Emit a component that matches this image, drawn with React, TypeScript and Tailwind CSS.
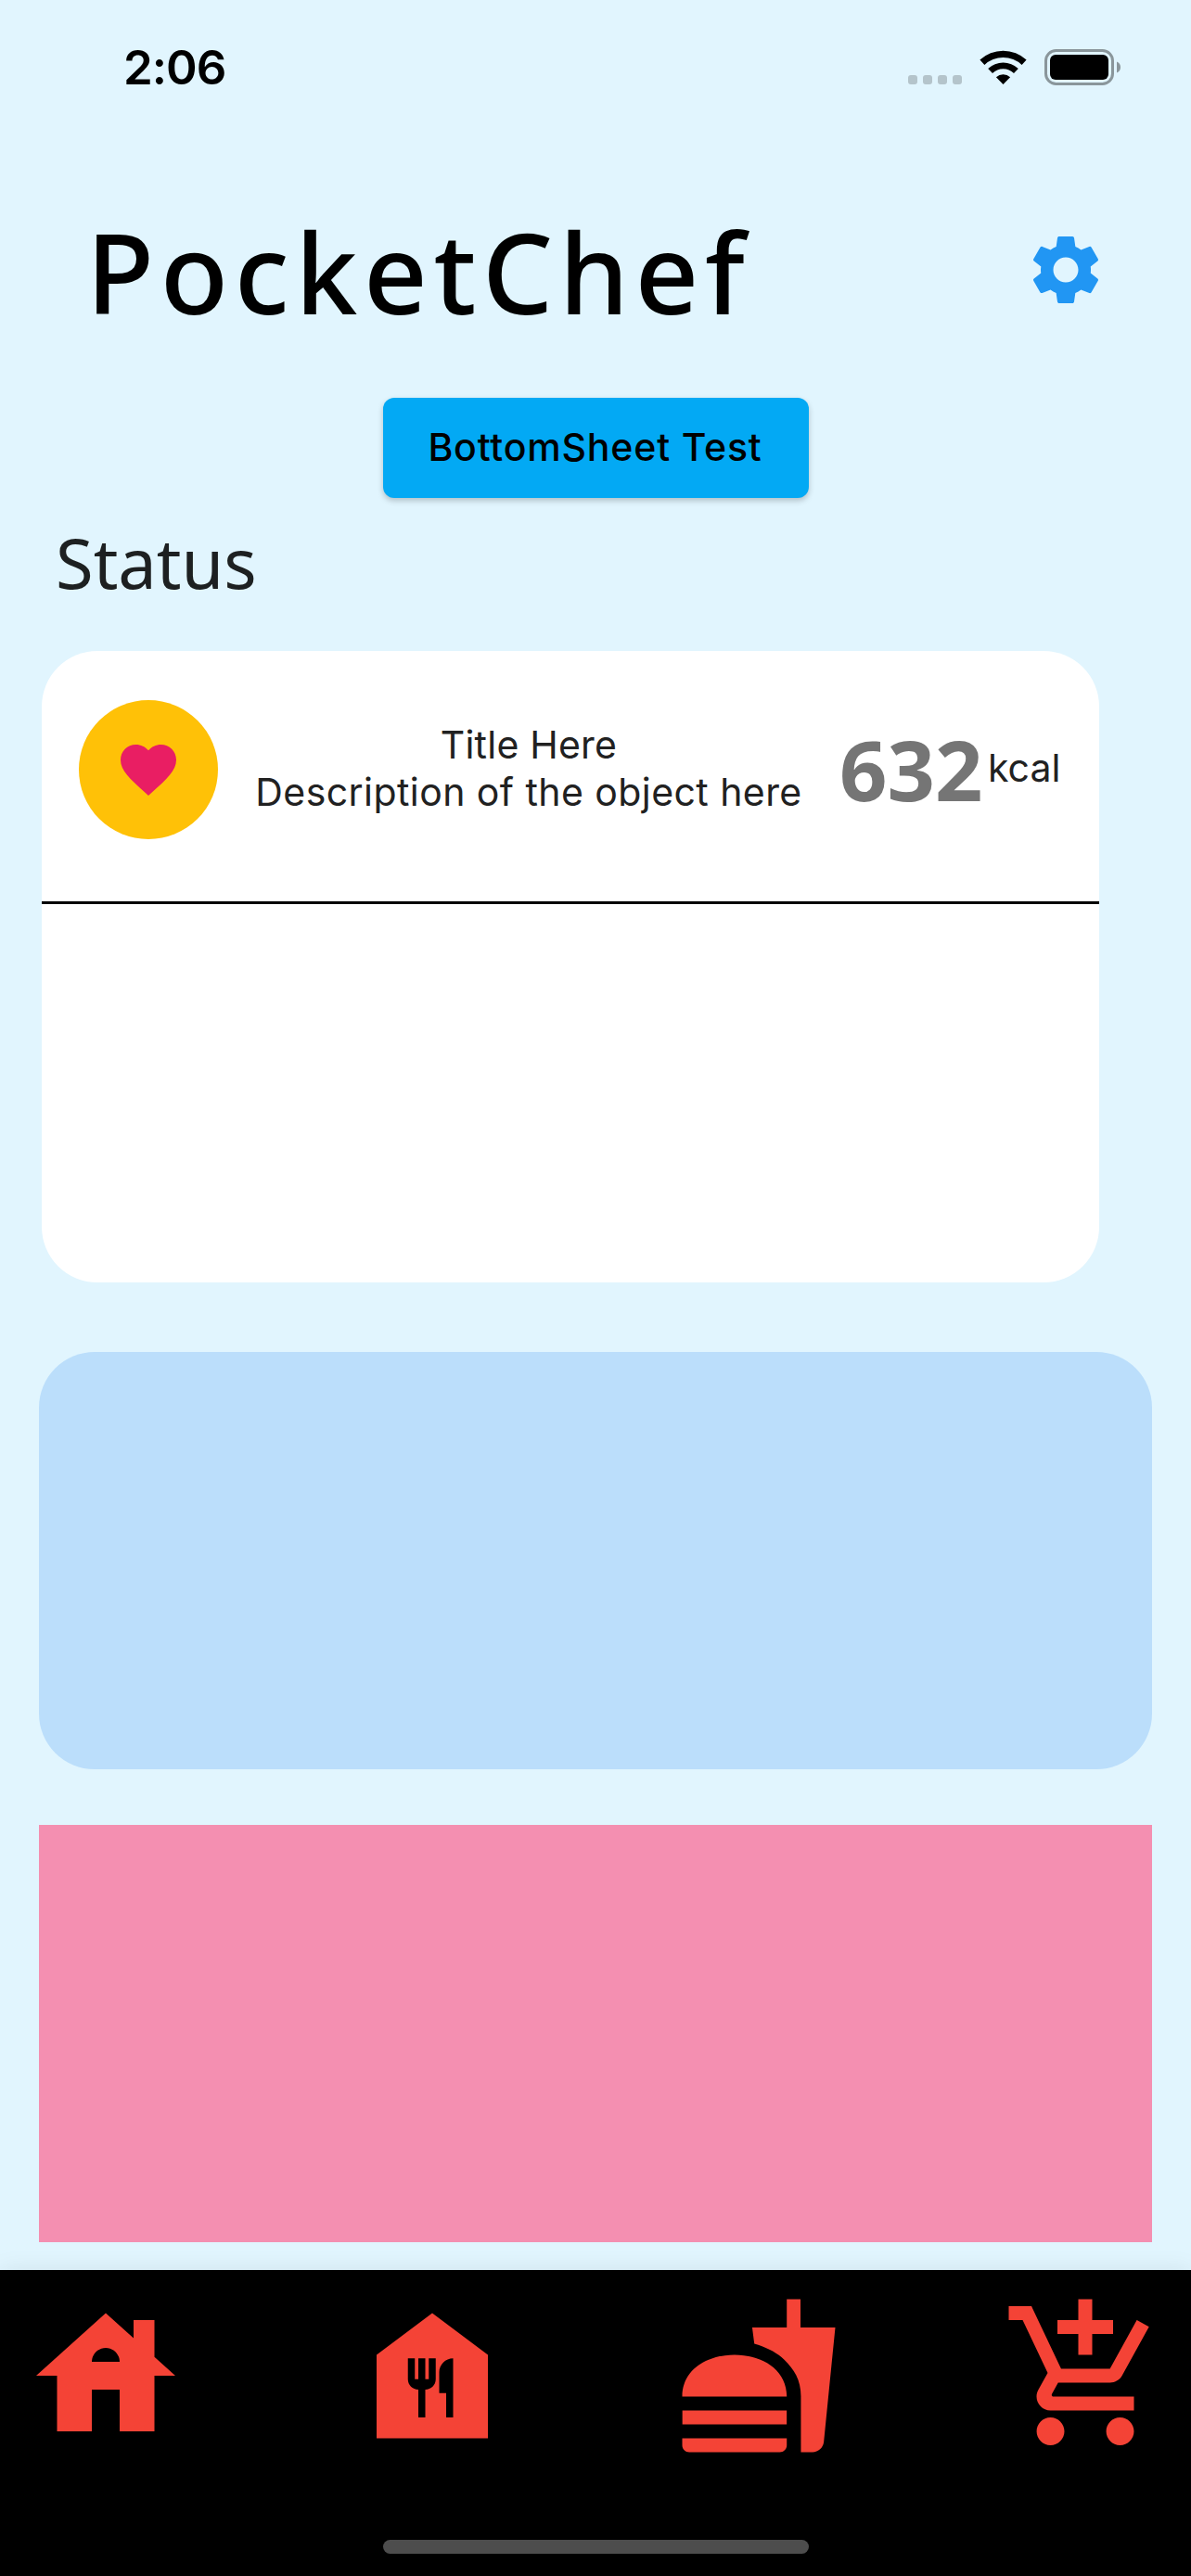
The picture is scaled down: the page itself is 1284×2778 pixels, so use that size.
import React from 'react';
import {
  MdAddShoppingCart,
  MdFastfood,
  MdFavorite,
  MdFoodBank,
  MdHouse,
  MdSettings,
} from 'react-icons/md';

function WifiIcon() {
  return (
    <svg className="mt-[54px] ml-[19px] h-[37px] w-[51px]" viewBox="0 0 51 37" fill="#000" aria-hidden="true">
      <path d="M0.4 10.6A36.8 36.8 0 0 1 50.6 10.6L45.6 15.9A29.3 29.3 0 0 0 5.4 15.9Z" />
      <path d="M9.2 19.9A24 24 0 0 1 41.8 19.9L37 25A16.5 16.5 0 0 0 14 25Z" />
      <path d="M17.9 29.2A11.2 11.2 0 0 1 33.1 29.2L25.5 37Z" />
    </svg>
  );
}

function BatteryIcon() {
  return (
    <svg className="mt-[53px] ml-[19px] h-[39px] w-[82px]" viewBox="0 0 82 39" aria-hidden="true">
      <rect x="1.5" y="1.5" width="72" height="36" rx="11" fill="none" stroke="#8a969b" strokeWidth="3" />
      <rect x="6" y="6" width="63" height="27" rx="6" fill="#000" />
      <path d="M78 13.5C80.5 14.5 82 16.8 82 19.5S80.5 24.5 78 25.5Z" fill="#8a969b" />
    </svg>
  );
}

function StatusBar() {
  return (
    <div className="flex h-[141px] items-start justify-between pr-[76px] pl-[133px]">
      <span className="mt-[43px] text-[51px] leading-[60px] font-semibold tracking-[-1px] text-black">2:06</span>
      <div className="flex items-start">
        <div className="mt-[81px] flex gap-[6px]">
          {[0, 1, 2, 3].map((i) => (
            <span key={i} className="size-[10px] rounded-[3px] bg-[#b4c4cb]" />
          ))}
        </div>
        <WifiIcon />
        <BatteryIcon />
      </div>
    </div>
  );
}

export default function App() {
  return (
    <div className="flex h-[2778px] w-[1284px] flex-col overflow-hidden bg-[#e1f5fe] font-[Inter,sans-serif]">
      <StatusBar />

      <header className="mt-[72px] flex h-[160px] items-center justify-between pr-[90px] pl-[93px]">
        <h1 className="font-['Noto_Sans',sans-serif] text-[120px] leading-[160px] font-medium tracking-[6.6px] whitespace-nowrap text-black">
          PocketChef
        </h1>
        <MdSettings className="mb-[4px] size-[90px] text-[#2196f3]" />
      </header>

      <button className="mt-[56px] flex h-[108px] w-[459px] items-center justify-center self-center rounded-[12px] bg-[#03a9f4] pr-[1px] pb-[2px] text-[41px] leading-[51px] font-medium tracking-[0.82px] whitespace-nowrap text-black shadow-[0_3px_6px_rgba(0,0,0,0.22)]">
        BottomSheet Test
      </button>

      <h2 className="mt-[20px] ml-[60px] h-[100px] font-['Noto_Sans',sans-serif] text-[74px] leading-[100px] text-[#1d2021]">
        Status
      </h2>

      <section className="mt-[45px] ml-[45px] h-[681px] w-[1140px] shrink-0 overflow-hidden rounded-[60px] bg-white text-[#212121]">
        <div className="flex h-[255px] items-center pl-[40px] text-[41px] leading-[51px] whitespace-nowrap">
          <div className="flex size-[150px] shrink-0 items-center justify-center rounded-full bg-[#ffc107]">
            <MdFavorite className="size-[72px] text-[#e91e63]" />
          </div>
          <div className="ml-[40px] w-[590px] pb-[2px] text-center tracking-[0.43px]">
            <p className="tracking-[0.23px]">Title Here</p>
            <p>Description of the object here</p>
          </div>
          <span className="ml-[40px] w-[156px] font-['Noto_Sans',sans-serif] text-[90px] leading-[123px] font-bold text-[#757575]">
            632
          </span>
          <span className="ml-[4px] pb-[2px]">kcal</span>
        </div>
        <div className="mt-[15px] h-[3px] bg-black" />
      </section>

      <section className="mx-[42px] mt-[75px] h-[450px] shrink-0 rounded-[60px] bg-[#bbdefb]" />
      <section className="mx-[42px] mt-[60px] h-[450px] shrink-0 bg-[#f48fb1]" />

      <nav className="mt-[30px] flex h-[330px] shrink-0 flex-col items-center justify-between bg-black pb-[24px] shadow-[0_0_24px_rgba(0,0,0,0.08)]">
        <div className="flex w-full justify-between px-[24px] pt-[24px] text-[#f44336]">
          <MdHouse className="size-[180px]" />
          <MdFoodBank className="size-[180px]" />
          <MdFastfood className="size-[180px]" />
          <MdAddShoppingCart className="size-[180px]" />
        </div>
        <div className="h-[15px] w-[459px] rounded-full bg-[#4d4d4d]" />
      </nav>
    </div>
  );
}
